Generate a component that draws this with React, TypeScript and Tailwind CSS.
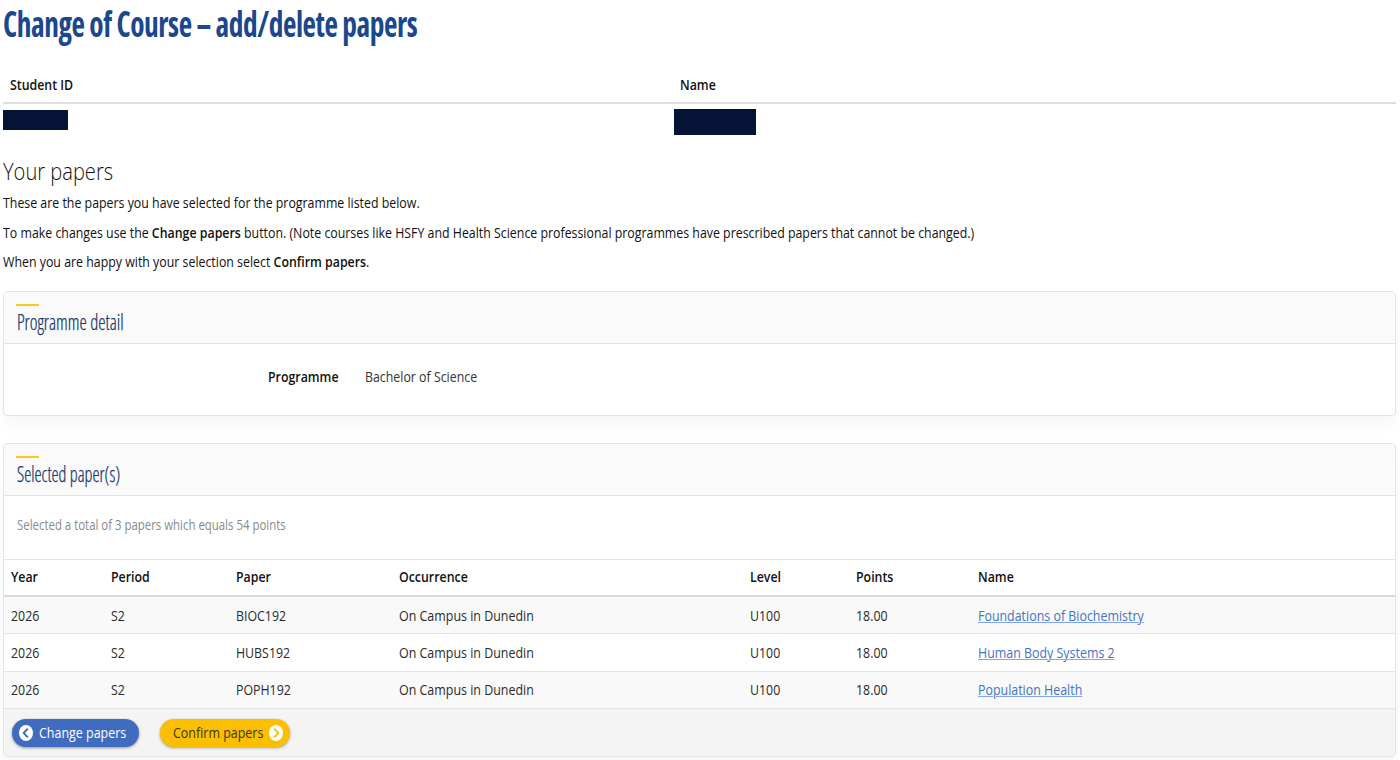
import type { ReactNode } from "react";

const papers = [
  { code: "BIOC192", name: "Foundations of Biochemistry" },
  { code: "HUBS192", name: "Human Body Systems 2" },
  { code: "POPH192", name: "Population Health" },
];

const columns =
  "grid grid-cols-[100px_125px_163px_351px_106px_122px_1fr] items-center pl-[7px]";

function Narrow({ children, className = "scale-x-[0.824]" }: { children: ReactNode; className?: string }) {
  return <span className={`inline-block origin-left whitespace-nowrap ${className}`}>{children}</span>;
}

function PanelHeader({ title, scale }: { title: string; scale: string }) {
  return (
    <div className="h-[52px] border-b border-[#e2e2e2] bg-[#fafafa] pl-[12px] pt-[12px]">
      <div className="h-[2px] w-[23px] bg-[#fbc724]" />
      <h3 className="mt-px pl-px text-[21.5px] font-light leading-[30px] text-[#17376e] [font-stretch:75%]">
        <Narrow className={`[-webkit-text-stroke:0.25px_#17376e] ${scale}`}>{title}</Narrow>
      </h3>
    </div>
  );
}

function Chevron({ d, color }: { d: string; color: string }) {
  return (
    <svg width="14" height="16" viewBox="0 0 14 16" fill="none" className="shrink-0">
      <ellipse cx="7" cy="8" rx="7" ry="8" fill="#fff" />
      <path d={d} stroke={color} strokeWidth="1.9" />
    </svg>
  );
}

export default function App() {
  return (
    <div className="h-[760px] w-[1400px] overflow-hidden bg-white pl-[3px] pr-[4px] font-['Open_Sans',sans-serif] text-[15px] text-[#111]">
      <h1 className="h-[68px] text-[35.5px] font-bold leading-[46px] tracking-[-0.5px] text-[#1b478c] [font-stretch:75%]">
        <Narrow className="scale-x-[0.826]">Change of Course – add/delete papers</Narrow>
      </h1>

      <div className="grid h-[36px] grid-cols-[670px_1fr] border-b-2 border-[#dedede] pl-[7px] font-semibold leading-[33px]">
        <div><Narrow>Student ID</Narrow></div>
        <div><Narrow>Name</Narrow></div>
      </div>
      <div className="grid h-[48px] grid-cols-[671px_1fr] items-start pt-[5px]">
        <div className="mt-px h-[20px] w-[65px] bg-[#041336]" />
        <div className="h-[26px] w-[82px] bg-[#041336]" />
      </div>

      <h2 className="h-[36px] text-[23.5px] font-light leading-[38px]">
        <Narrow className="scale-x-[0.855]">Your papers</Narrow>
      </h2>
      <div className="h-[103px] leading-[29.6px]">
        <p><Narrow>These are the papers you have selected for the programme listed below.</Narrow></p>
        <p>
          <Narrow>
            To make changes use the <b className="font-semibold">Change papers</b> button. (Note courses like HSFY and Health Science professional programmes have prescribed papers that cannot be changed.)
          </Narrow>
        </p>
        <p><Narrow>When you are happy with your selection select <b className="font-semibold">Confirm papers</b>.</Narrow></p>
      </div>

      <section className="h-[125px] overflow-visible rounded-[4px] border border-[#e4e4e4] shadow-[0_8px_18px_rgba(0,0,0,0.04)]">
        <PanelHeader title="Programme detail" scale="scale-x-[0.856]" />
        <div className="flex pl-[264px] pt-[16px] leading-[32px]">
          <div className="w-[97px] font-semibold"><Narrow>Programme</Narrow></div>
          <div className="text-[#333]"><Narrow>Bachelor of Science</Narrow></div>
        </div>
      </section>

      <section className="mt-[27px] h-[314px] overflow-hidden rounded-[4px] border border-[#e4e4e4] shadow-[0_8px_18px_rgba(0,0,0,0.04)]">
        <PanelHeader title="Selected paper(s)" scale="scale-x-[0.835]" />
        <p className="h-[63px] pl-[12.5px] pt-[13px] text-[14px] leading-[32px] text-[#8a8a8a]">
          <Narrow className="scale-x-[0.815]">Selected a total of 3 papers which equals 54 points</Narrow>
        </p>
        <div className={`${columns} h-[38px] border-t border-b-2 border-t-[#e4e4e4] border-b-[#dadada] pb-[2px] font-semibold`}>
          {["Year", "Period", "Paper", "Occurrence", "Level", "Points", "Name"].map((h) => (
            <div key={h}><Narrow>{h}</Narrow></div>
          ))}
        </div>
        {papers.map((p) => (
          <div key={p.code} className={`${columns} h-[37.4px] border-b border-[#e4e4e4] pb-[0.6px] text-[#2a2a2a] odd:bg-white even:bg-[#f9f9f9]`}>
            <div><Narrow>2026</Narrow></div>
            <div><Narrow>S2</Narrow></div>
            <div><Narrow>{p.code}</Narrow></div>
            <div><Narrow className="scale-x-[0.829]">On Campus in Dunedin</Narrow></div>
            <div><Narrow>U100</Narrow></div>
            <div><Narrow>18.00</Narrow></div>
            <div>
              <Narrow className="scale-x-[0.828]">
                <a href="#" className="text-[#4573c4] underline decoration-[#7fa5ee] decoration-1 underline-offset-1">{p.name}</a>
              </Narrow>
            </div>
          </div>
        ))}
        <div className="flex h-[50px] items-start gap-[21px] bg-[#f4f4f4] pl-[8px] pt-[10px]">
          <button className="flex h-[28px] w-[127px] items-center gap-[6px] rounded-full bg-[#406cbf] pb-px pl-[7px] text-white shadow-[0_1px_3px_rgba(0,0,0,0.4)]">
            <Chevron d="M8.8 3.6 4.7 8l4.1 4.4" color="#406cbf" />
            <Narrow className="scale-x-[0.83]">Change papers</Narrow>
          </button>
          <button className="flex h-[28px] w-[130px] items-center rounded-full bg-[#f9bf00] pb-px pl-[13px] text-[#3f3510] shadow-[0_1px_3px_rgba(0,0,0,0.35)]">
            <span className="w-[96px]"><Narrow className="scale-x-[0.83]">Confirm papers</Narrow></span>
            <Chevron d="M5.2 3.6 9.3 8l-4.1 4.4" color="#f9bf00" />
          </button>
        </div>
      </section>
    </div>
  );
}
